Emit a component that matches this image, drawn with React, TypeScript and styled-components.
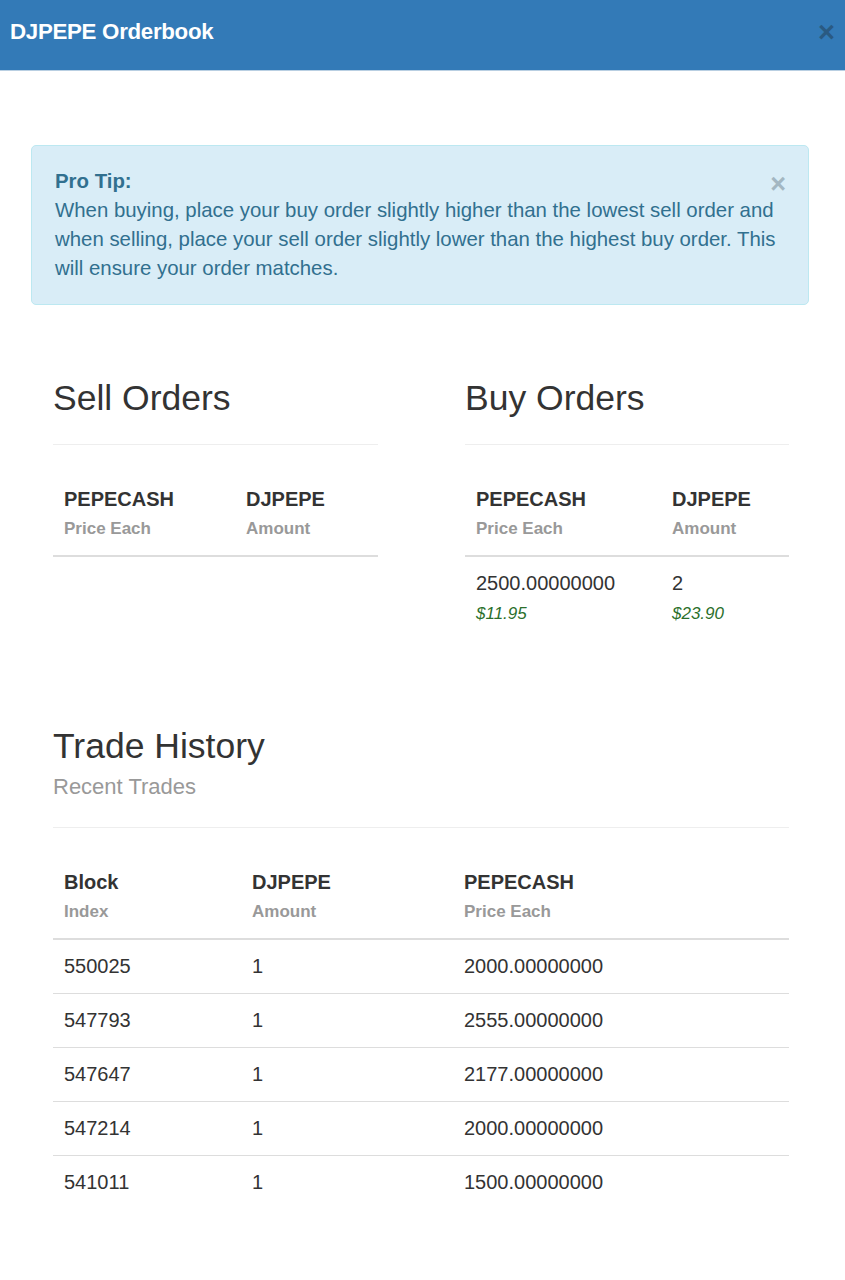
import React from "react";
import styled, { createGlobalStyle } from "styled-components";

const Global = createGlobalStyle`
  html, body { margin: 0; padding: 0; background: #fff; }
  body { font-family: "Liberation Sans", Arial, sans-serif; color: #333; font-size: 20px; line-height: 1.43; }
  * { box-sizing: border-box; }
`;

const Page = styled.div`
  width: 845px;
  min-height: 1280px;
  background: #fff;
`;

const Header = styled.header`
  height: 71px;
  background: #337ab7;
  border-bottom: 1px solid #b9cfe2;
  display: flex;
  align-items: center;
  justify-content: space-between;
  padding: 0 10px 5px 10px;
`;

const Title = styled.h4`
  margin: 0;
  color: #fff;
  font-size: 22.3px;
  font-weight: bold;
  letter-spacing: -0.3px;
  line-height: 1.1;
`;

const CloseButton = styled.button<{ $tone: "dark" | "light" }>`
  border: 0;
  background: transparent;
  padding: 0;
  font-family: "Liberation Sans", Arial, sans-serif;
  font-weight: bold;
  font-size: ${(p) => (p.$tone === "dark" ? "29px" : "27px")};
  line-height: 1;
  color: ${(p) => (p.$tone === "dark" ? "#2a5a82" : "#a3b7c2")};
  cursor: pointer;
`;

const Body = styled.main`
  padding: 74px 36px 60px 31px;
`;

const Alert = styled.div`
  position: relative;
  background: #d9edf7;
  border: 1px solid #bce8f1;
  border-radius: 5px;
  color: #31708f;
  padding: 21px 10px 21px 23px;
`;

const AlertText = styled.div`
  font-size: 20.4px;
  line-height: 29px;
  max-width: 735px;
`;

const AlertClose = styled.div`
  position: absolute;
  top: 25px;
  right: 22px;
`;

const Strong = styled.strong`
  font-weight: bold;
`;

const Inner = styled.div`
  padding: 0 20px 0 22px;
`;

const OrdersGrid = styled.div`
  display: grid;
  grid-template-columns: 325px 324px;
  column-gap: 87px;
  margin-top: 75px;
`;

const Section = styled.section``;

const Heading = styled.h3`
  margin: 0;
  font-size: 35.5px;
  font-weight: 500;
  line-height: 37px;
  color: #333;
`;

const Subtitle = styled.div`
  font-size: 22px;
  color: #999;
  line-height: 26px;
  margin-top: 9px;
`;

const Rule = styled.hr`
  border: 0;
  border-top: 1px solid #eee;
  margin: 27px 0 28px 0;
`;

const Table = styled.table`
  width: 100%;
  border-collapse: collapse;
`;

const Th = styled.th<{ $w?: string }>`
  text-align: left;
  vertical-align: bottom;
  padding: 12px 11px 12px 11px;
  border-bottom: 2px solid #ddd;
  font-size: 20px;
  line-height: 29px;
  font-weight: bold;
  color: #333;
  width: ${(p) => p.$w || "auto"};
`;

const Sub = styled.small`
  display: block;
  font-size: 17px;
  color: #999;
  font-weight: bold;
  line-height: 29px;
`;

const Td = styled.td`
  padding: 12px 11px;
  font-size: 20px;
  line-height: 29px;
  color: #333;
  vertical-align: top;
`;

const Tr = styled.tr`
  & + & td {
    border-top: 1px solid #ddd;
  }
`;

const Usd = styled.em`
  display: block;
  font-size: 17px;
  line-height: 31px;
  color: #2b6f2b;
  font-style: italic;
`;

const HistorySection = styled.section`
  margin-top: 87px;
`;

const trades = [
  ["550025", "1", "2000.00000000"],
  ["547793", "1", "2555.00000000"],
  ["547647", "1", "2177.00000000"],
  ["547214", "1", "2000.00000000"],
  ["541011", "1", "1500.00000000"],
];

export default function App() {
  return (
    <Page>
      <Global />
      <Header>
        <Title>DJPEPE Orderbook</Title>
        <CloseButton $tone="dark" aria-label="Close">×</CloseButton>
      </Header>
      <Body>
        <Alert>
          <AlertText>
            <Strong>Pro Tip:</Strong>
            <br />
            When buying, place your buy order slightly higher than the lowest sell order and when selling, place your sell order slightly lower than the highest buy order. This will ensure your order matches.
          </AlertText>
          <AlertClose>
            <CloseButton $tone="light" aria-label="Dismiss">×</CloseButton>
          </AlertClose>
        </Alert>
        <Inner>
          <OrdersGrid>
            <Section>
              <Heading>Sell Orders</Heading>
              <Rule />
              <Table>
                <thead>
                  <tr>
                    <Th $w="182px">PEPECASH<Sub>Price Each</Sub></Th>
                    <Th>DJPEPE<Sub>Amount</Sub></Th>
                  </tr>
                </thead>
              </Table>
            </Section>
            <Section>
              <Heading>Buy Orders</Heading>
              <Rule />
              <Table>
                <thead>
                  <tr>
                    <Th $w="196px">PEPECASH<Sub>Price Each</Sub></Th>
                    <Th>DJPEPE<Sub>Amount</Sub></Th>
                  </tr>
                </thead>
                <tbody>
                  <Tr>
                    <Td>2500.00000000<Usd>$11.95</Usd></Td>
                    <Td>2<Usd>$23.90</Usd></Td>
                  </Tr>
                </tbody>
              </Table>
            </Section>
          </OrdersGrid>
          <HistorySection>
            <Heading>Trade History</Heading>
            <Subtitle>Recent Trades</Subtitle>
            <Rule />
            <Table>
              <thead>
                <tr>
                  <Th $w="188px">Block<Sub>Index</Sub></Th>
                  <Th $w="212px">DJPEPE<Sub>Amount</Sub></Th>
                  <Th>PEPECASH<Sub>Price Each</Sub></Th>
                </tr>
              </thead>
              <tbody>
                {trades.map((t) => (
                  <Tr key={t[0]}>
                    <Td>{t[0]}</Td>
                    <Td>{t[1]}</Td>
                    <Td>{t[2]}</Td>
                  </Tr>
                ))}
              </tbody>
            </Table>
          </HistorySection>
        </Inner>
      </Body>
    </Page>
  );
}
